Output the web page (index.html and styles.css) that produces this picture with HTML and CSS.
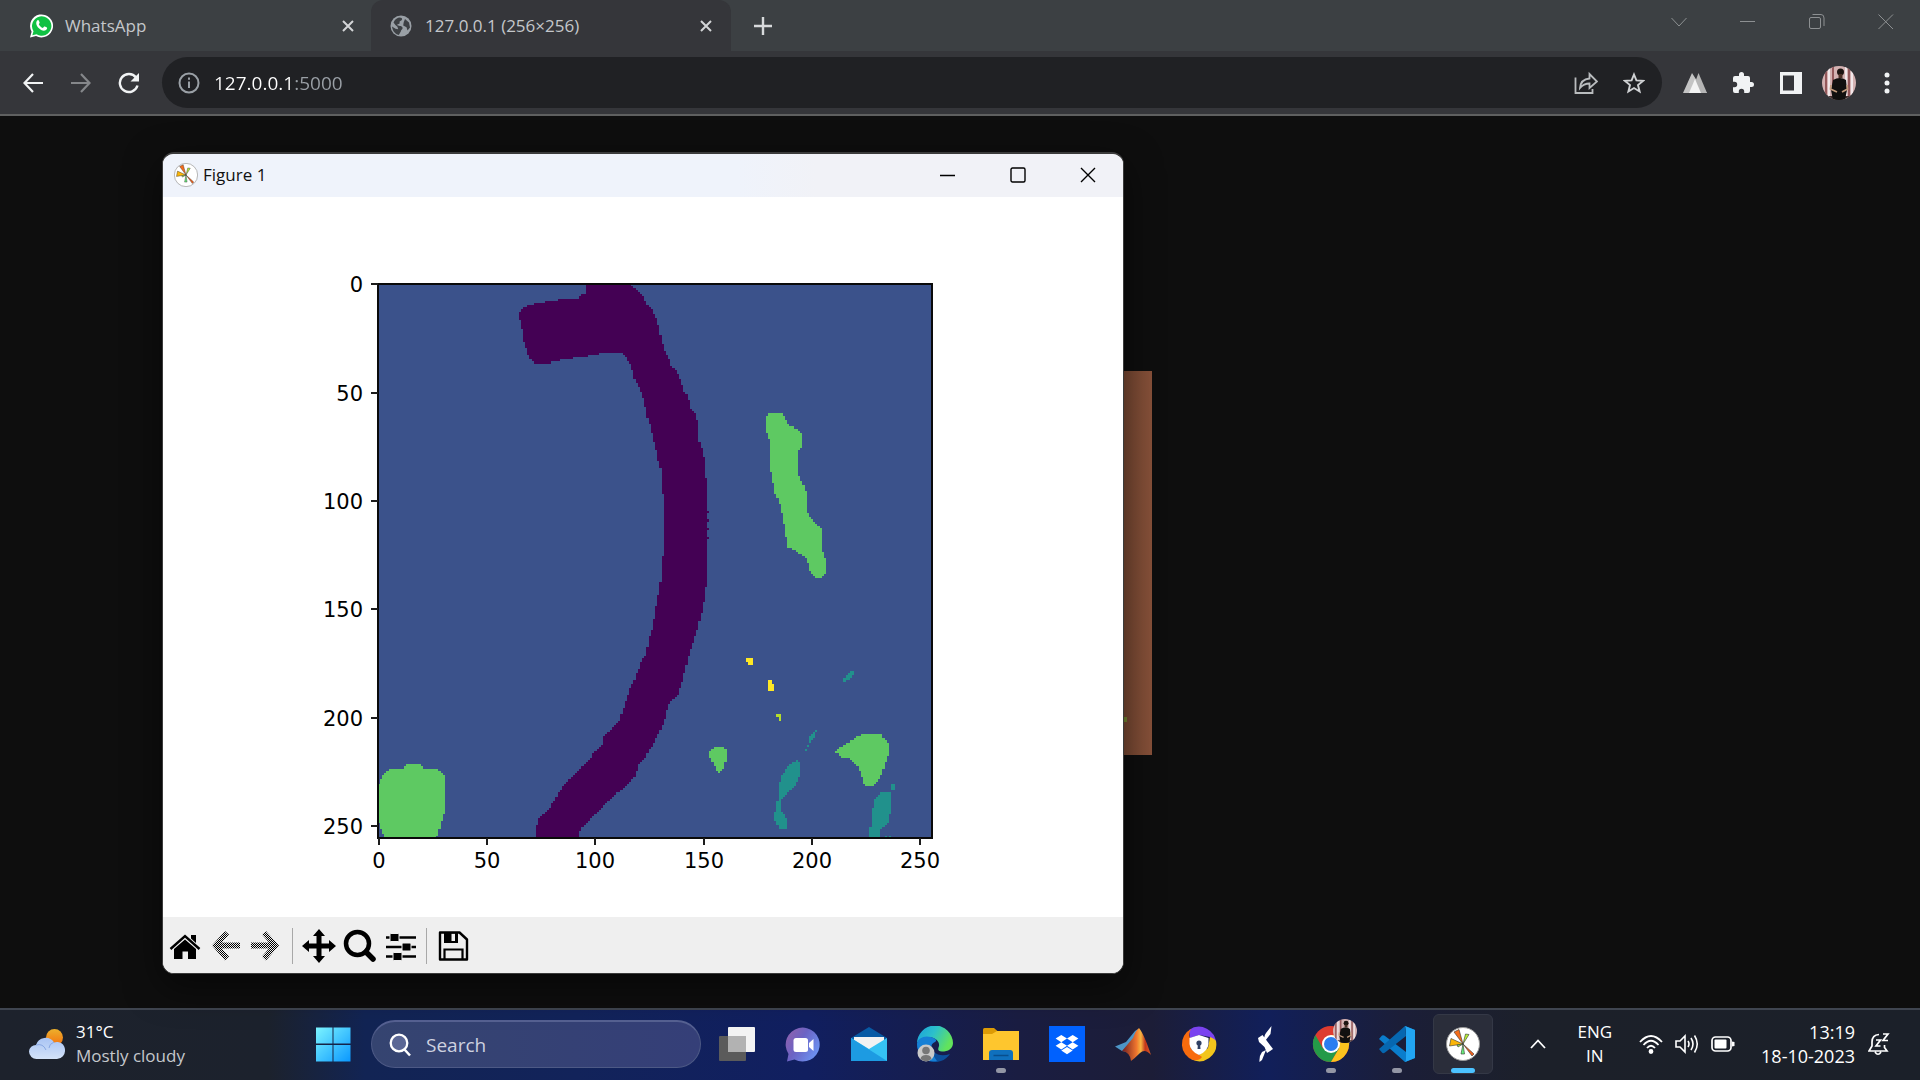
FILE: index.html
```html
<!DOCTYPE html>
<html lang="en">
<head>
<meta charset="utf-8">
<title>127.0.0.1 (256×256)</title>
<link rel="stylesheet" href="styles.css">
</head>
<body>
<div class="desktop">
  <header class="browser">
    <div class="tabstrip">
      <div class="tab">
        <svg class="favicon" viewBox="0 0 24 24"><path d="M1 23.500 2.600 17.700A11.500 11.500 0 1 1 7 22Z" fill="#fff"/><path d="M3.300 21.300 4.500 17.200A9.700 9.700 0 1 1 7.500 20.200Z" fill="#10c143"/><path d="M8.300 6.400c.5-.5 1.200-.4 1.500.2l.8 2c.1.400 0 .7-.8 1.600.9 1.900 2.200 3 4.100 3.800l1-1.200c.3-.3.600-.4 1-.2l2 1c.5.3.3 2-1.300 2.700-2.300 1-5-.4-7-2.400-2-2.200-3.400-5.300-1.300-7.500z" fill="#fff"/></svg>
        <span class="tab-title">WhatsApp</span>
        <button class="tab-close" aria-label="Close WhatsApp"><svg width="12" height="12" viewBox="0 0 12 12"><path d="M1 1 11 11M11 1 1 11" stroke="#d3d5d7" stroke-width="2"/></svg></button>
      </div>
      <div class="tab tab-active">
        <svg class="favicon" viewBox="0 0 24 24"><circle cx="12" cy="12" r="10.500" fill="#9aa0a6"/><path d="M10 3.500c3 .2 3.800 1.200 2.600 2.700l-2 1.300v2L8 10.800c1 1.500 5 .5 5.600 3 .3 1.500-1.500 2-1.800 3.600L9.800 21C6 20 3.500 17 3 12.500l3.500 2.200 2.700.5-.8-2.500-2-1.700L4.500 8.500C5.500 6 7.500 4.300 10 3.500zM16 5l4 3.500 1 5-2.500 3-1-3.200-3.300-1.700.5-3.300z" fill="#3d4044"/></svg>
        <span class="tab-title">127.0.0.1 (256×256)</span>
        <button class="tab-close" aria-label="Close 127.0.0.1"><svg width="12" height="12" viewBox="0 0 12 12"><path d="M1 1 11 11M11 1 1 11" stroke="#d3d5d7" stroke-width="2"/></svg></button>
      </div>
      <button class="new-tab" aria-label="New tab"><svg width="18" height="18" viewBox="0 0 18 18"><path d="M9 0V18M0 9H18" stroke="#d8dadc" stroke-width="2.400"/></svg></button>
      <div class="window-controls">
        <button aria-label="Search tabs"><svg width="16" height="16" viewBox="0 0 16 16"><path d="M.500 4 8 12 15.500 4"/></svg></button>
        <button aria-label="Minimize"><svg width="16" height="16" viewBox="0 0 16 16"><path d="M0 7.500H15"/></svg></button>
        <button aria-label="Restore"><svg width="16" height="16" viewBox="0 0 16 16"><rect x=".5" y="3.500" width="11" height="11" rx="1.500"/><path d="M3.500 .500H12Q15 .500 15 4V12"/></svg></button>
        <button aria-label="Close"><svg width="16" height="16" viewBox="0 0 16 16"><path d="M.500 .500 15 15M15 .500 .500 15"/></svg></button>
      </div>
    </div>
    <div class="toolbar">
      <button class="tool" aria-label="Back"><svg width="20" height="20" viewBox="0 0 20 20"><path d="M10 1 1.500 10 10 19M1.500 10H20" fill="none" stroke="#f1f3f4" stroke-width="2.200"/></svg></button>
      <button class="tool" aria-label="Forward"><svg width="20" height="20" viewBox="0 0 20 20"><path d="M10 1 18.500 10 10 19M18.500 10H0" fill="none" stroke="#85878a" stroke-width="2.200"/></svg></button>
      <button class="tool" aria-label="Reload"><svg width="22" height="22" viewBox="0 0 22 22"><path d="M18 5.500A9 9 0 1 0 19.500 13.500" fill="none" stroke="#f1f3f4" stroke-width="2.400"/><path d="M21 1V9.500H12.500Z" fill="#f1f3f4"/></svg></button>
      <div class="omnibox">
        <svg width="22" height="22" viewBox="0 0 22 22"><circle cx="11" cy="11" r="9.500" fill="none" stroke="#9aa0a6" stroke-width="2"/><path d="M11 9.500V16M11 5.500V7.700" stroke="#9aa0a6" stroke-width="2"/></svg>
        <input class="address" type="text" value="127.0.0.1:5000" aria-label="Address">
        <button aria-label="Share"><svg width="24" height="24" viewBox="0 0 24 24" fill="none" stroke="#b9bcbe" stroke-width="1.800"><path d="M1.500 6.500V22H18.500V18"/><path d="M6 17C6.500 11 10 8 15.500 7.500V3L23 10.500 15.500 17V12.500C11.500 12.500 8.500 14 6 17Z"/></svg></button>
        <button aria-label="Bookmark"><svg width="22" height="22" viewBox="0 0 22 22"><path d="M11 2.500 13.400 8.400 20 8.900 15 13.100 16.600 19.500 11 16 5.400 19.500 7 13.100 2 8.900 8.600 8.400Z" fill="none" stroke="#d0d2d4" stroke-width="1.900"/></svg></button>
      </div>
      <button class="tool" aria-label="Extension"><svg width="24" height="22" viewBox="0 0 24 22"><path d="M0 21 9 1 16 12 24 21Z" fill="#c4c4c4"/><path d="M8 21 15.500 1 24 21Z" fill="#b5b5b5"/><path d="M6 21 12 7 18 21Z" fill="#f3f3f3"/></svg></button>
      <button class="tool" aria-label="Extensions"><svg width="24" height="24" viewBox="0 0 24 24"><path d="M20.500 11H19V7a2 2 0 0 0-2-2h-4V3.500a2.500 2.500 0 0 0-5 0V5H4a2 2 0 0 0-2 2v3.800h1.500a2.700 2.700 0 0 1 0 5.400H2V20a2 2 0 0 0 2 2h3.800v-1.500a2.700 2.700 0 0 1 5.400 0V22H17a2 2 0 0 0 2-2v-4h1.500a2.500 2.500 0 0 0 0-5z" fill="#f1f3f4"/></svg></button>
      <button class="tool" aria-label="Side panel"><svg width="22" height="22" viewBox="0 0 22 22"><path d="M0 0H22V22H0ZM3 3.500V18.500H14V3.500Z" fill="#f1f3f4" fill-rule="evenodd"/></svg></button>
      <button class="tool" aria-label="Profile"><svg width="34" height="34" viewBox="0 0 34 34"><use href="#portrait"/></svg></button>
      <button class="tool" aria-label="Menu"><svg width="6" height="22" viewBox="0 0 6 22" fill="#f1f3f4"><circle cx="3" cy="3" r="2.500"/><circle cx="3" cy="11" r="2.500"/><circle cx="3" cy="19" r="2.500"/></svg></button>
    </div>
  </header>

  <main class="page">
    <div class="served-image" role="img" aria-label="Image served by 127.0.0.1"><span class="speck"></span></div>
  </main>

  <section class="figure-window" aria-label="Figure 1">
    <div class="figure-title">
      <svg width="24" height="24" viewBox="0 0 34 34"><use href="#mpl"/></svg>
      <span>Figure 1</span>
      <div class="figure-controls">
        <button aria-label="Minimize figure"><svg width="16" height="16" viewBox="0 0 16 16"><path d="M0 8.500H15"/></svg></button>
        <button aria-label="Maximize figure"><svg width="16" height="16" viewBox="0 0 16 16"><rect x="1" y="1" width="14" height="14" rx="1.500"/></svg></button>
        <button aria-label="Close figure"><svg width="16" height="16" viewBox="0 0 16 16"><path d="M1 1 15 15M15 1 1 15"/></svg></button>
      </div>
    </div>
    <svg class="plot" viewBox="0 0 960 720" role="img" aria-label="Segmentation mask">
      <rect x="215" y="87" width="554" height="554" fill="#3b528b"/>
      <g id="mask" transform="translate(214.800 86.400) scale(2.166)" shape-rendering="crispEdges"></g>
      <rect x="215" y="87" width="554" height="554" fill="none" stroke="#0a0a0a" stroke-width="2"/>
      <path class="ticks" d="M208 87H215M208 196H215M208 304H215M208 412H215M208 521H215M208 629H215M216 641V648M324 641V648M432 641V648M541 641V648M649 641V648M757 641V648"/>
      <g class="labels y-labels"><text x="200" y="95">0</text><text x="200" y="204">50</text><text x="200" y="312">100</text><text x="200" y="420">150</text><text x="200" y="529">200</text><text x="200" y="637">250</text></g>
      <g class="labels x-labels"><text x="216" y="671">0</text><text x="324" y="671">50</text><text x="432" y="671">100</text><text x="541" y="671">150</text><text x="649" y="671">200</text><text x="757" y="671">250</text></g>
    </svg>
    <div class="figure-toolbar">
      <button aria-label="Home"><svg width="34" height="34" viewBox="0 0 34 34"><path d="M6 20 17 10.500 28 20V30H20V22.500H14.500V30H6Z"/><path d="M2.500 20 17 7 31.500 20" fill="none" stroke="#000" stroke-width="2.400"/><path d="M23 6H28V14L23 9.500Z"/></svg></button>
      <button aria-label="Previous view" disabled><svg width="34" height="34" viewBox="0 0 34 34"><path d="M3 16.500 16 2 20 5.500 13 13.500H31V19.500H13L20 27.500 16 31.500Z" fill="url(#dither)"/></svg></button>
      <button aria-label="Next view" disabled><svg width="34" height="34" viewBox="0 0 34 34"><path d="M29 16.500 16 2 12 5.500 19 13.500H1V19.500H19L12 27.500 16 31.500Z" fill="url(#dither)"/></svg></button>
      <span class="divider"></span>
      <button aria-label="Pan"><svg width="34" height="34" viewBox="0 0 34 34"><path d="M17 0 23 7H19.500V14.500H27V11L34 17 27 23V19.500H19.500V27H23L17 34 11 27H14.500V19.500H7V23L0 17 7 11V14.500H14.500V7H11Z"/></svg></button>
      <button aria-label="Zoom"><svg width="34" height="34" viewBox="0 0 34 34"><circle cx="14.500" cy="14.500" r="11.500" fill="none" stroke="#000" stroke-width="4.500"/><path d="M23 23 30 30" stroke="#000" stroke-width="5.500" stroke-linecap="round"/></svg></button>
      <button aria-label="Configure subplots"><svg width="34" height="34" viewBox="0 0 34 34"><path d="M2 8.500H32M2 18H32M2 27.500H32" stroke="#000" stroke-width="2.500"/><rect x="6" y="4.500" width="9" height="8" rx="1" stroke="#efefef"/><rect x="18" y="14" width="9" height="8" rx="1" stroke="#efefef"/><rect x="9" y="23.500" width="9" height="8" rx="1" stroke="#efefef"/></svg></button>
      <span class="divider"></span>
      <button aria-label="Save"><svg width="34" height="34" viewBox="0 0 34 34"><path d="M4 3.500H23.500L31 10.500V30.500H4Z" fill="none" stroke="#000" stroke-width="2.400" stroke-linejoin="round"/><path d="M8 3H22V14H8ZM15.500 4.500V12H19V4.500Z" fill-rule="evenodd"/><path d="M8.500 30V20.500H26.500V30" fill="none" stroke="#000" stroke-width="2.200"/></svg></button>
    </div>
  </section>

  <footer class="taskbar">
    <button class="weather">
      <svg width="36" height="32" viewBox="0 0 36 32"><defs><linearGradient id="sun" x1="0" y1="0" x2="0" y2="1"><stop offset="0" stop-color="#ecb02c"/><stop offset="1" stop-color="#f4700f"/></linearGradient><linearGradient id="cloud" x1="0" y1="0" x2="0" y2="1"><stop offset="0" stop-color="#a9c4f4"/><stop offset="1" stop-color="#d3e2f8"/></linearGradient></defs><circle cx="25.500" cy="9.500" r="8.500" fill="url(#sun)"/><path d="M7 17A10 10 0 0 1 25 14.500 8 8 0 0 1 36 22 8.500 8.500 0 0 1 28 31H8A7.500 7.500 0 0 1 0 23.500 7 7 0 0 1 7 17Z" fill="url(#cloud)"/><path d="M7 17Q14 15 17 22M25 14Q20 16 20 20" fill="none" stroke="#88a8e4" stroke-width="1"/></svg>
      <span class="weather-text"><span>31°C</span><span class="muted">Mostly cloudy</span></span>
    </button>
    <nav class="apps" aria-label="Taskbar">
      <button class="app" aria-label="Start"><svg width="36" height="36" viewBox="0 0 36 36"><defs><linearGradient id="win" x1="0" y1="0" x2="1" y2="1"><stop offset="0" stop-color="#7cf4ff"/><stop offset="1" stop-color="#0a98ff"/></linearGradient></defs><path d="M1 1.500H17.500V17.500H1ZM18.500 1.500H35.500V17.500H18.500ZM1 19H17.500V35.500H1ZM18.500 19H35.500V35.500H18.500Z" fill="url(#win)"/></svg></button>
      <label class="search"><svg width="24" height="24" viewBox="0 0 24 24"><circle cx="11" cy="10" r="8.300" fill="#5b6795" stroke="#fff" stroke-width="2.300"/><path d="M16.500 16.500 22 22.500" stroke="#fff" stroke-width="2.500"/></svg><input type="text" placeholder="Search" aria-label="Search"></label>
      <button class="app" aria-label="Task view"><svg width="36" height="36" viewBox="0 0 36 36"><rect x="0" y="10" width="27" height="25" rx="1" fill="#5b5b5b"/><rect x="9" y="1" width="27" height="25" rx="1" fill="#f3f3f3"/><path d="M9 10H27V26H9Z" fill="#b2b2b2"/></svg></button>
      <button class="app" aria-label="Chat"><svg width="36" height="36" viewBox="0 0 36 36"><defs><linearGradient id="chat" x1="0" y1="0" x2="1" y2=".6"><stop offset="0" stop-color="#9560a8"/><stop offset=".5" stop-color="#6b63c4"/><stop offset="1" stop-color="#6c90ef"/></linearGradient></defs><path d="M2 35.500 3.500 28A17 17 0 1 1 9.500 33.500Z" fill="url(#chat)"/><rect x="8.500" y="12" width="14.500" height="14" rx="2.500" fill="#fff"/><path d="M24 17 28.500 13V25L24 21Z" fill="#fff"/></svg></button>
      <button class="app" aria-label="Mail"><svg width="36" height="36" viewBox="0 0 36 36"><path d="M0 12 18 1 36 12V20H0Z" fill="#075aa5"/><path d="M3 11H33V25H3Z" fill="#f2f2f2"/><path d="M0 12 18 23 36 12V35H0Z" fill="#35c2f3"/><path d="M0 12 36 35H0Z" fill="#1d9be2"/></svg></button>
      <button class="app" aria-label="Edge"><svg width="36" height="36" viewBox="0 0 36 36"><defs><linearGradient id="edge" x1="0" y1="0" x2="1" y2=".4"><stop offset="0" stop-color="#1aa0dc"/><stop offset=".5" stop-color="#2cc0cb"/><stop offset="1" stop-color="#62e35c"/></linearGradient></defs><path d="M0 17A18 18 0 0 0 33 28Q24 31 18 27 13 22 15 14Z" fill="#0c4f9c"/><path d="M0 18A18 18 0 0 1 36 17C36 23 31 25.500 25 25.500 20 25 21 23 22 20 23 14 16 11 11 11 5 11 1 14 0 18Z" fill="url(#edge)"/><path d="M0 18C1 12 7 9 14 11 20 13 20 15 18 16 12 18 13 26 20 35 9 37 0 29 0 18Z" fill="#1680d6"/><circle cx="9" cy="27" r="8.500" fill="#c9c9c9"/><circle cx="9" cy="24.500" r="3.800" fill="#777"/><path d="M3.500 33Q4 29 9 29T14.500 33Q9 37.500 3.500 33Z" fill="#777"/></svg></button>
      <button class="app running" aria-label="File Explorer"><svg width="36" height="36" viewBox="0 0 36 36"><path d="M0 3.500Q0 2 1.500 2H11L15 5.500V9L9 12H0Z" fill="#dd9b05"/><path d="M0 8H9L14 5H36V34H0Z" fill="#fec62e"/><path d="M6 34V27Q6 24 9 24H27Q30 24 30 27V34Z" fill="#0f70bd"/><path d="M10.500 29.500H25.500" stroke="#084e8c" stroke-width="1.500"/></svg></button>
      <button class="app" aria-label="Dropbox"><svg width="36" height="36" viewBox="0 0 36 36"><path fill="#0061fe" d="M0 0H36V36H0Z"/><path fill="#fff" d="M12.300 9 18 12.600 12.300 16.200 6.600 12.600ZM23.700 9 29.400 12.600 23.700 16.200 18 12.600ZM12.300 16.200 18 19.800 12.300 23.400 6.600 19.800ZM23.700 16.200 29.400 19.800 23.700 23.400 18 19.800ZM18 21 23.700 24.600 18 28.200 12.300 24.600Z"/></svg></button>
      <button class="app" aria-label="MATLAB"><svg width="36" height="36" viewBox="0 0 36 36"><defs><linearGradient id="mat"><stop offset="0" stop-color="#6e1c20"/><stop offset=".5" stop-color="#f0762e"/><stop offset=".65" stop-color="#f6b642"/><stop offset=".8" stop-color="#c2351b"/><stop offset="1" stop-color="#d65a26"/></linearGradient></defs><path d="M0 20.500 11 16 20 5 23 3 13 26 7 25Z" fill="#4d95c6"/><path d="M7 25Q13 18 18 12 21 4 24 2 29 8 36 29 30 22 25 27 20 32 16 35 15 26 7 25Z" fill="url(#mat)"/></svg></button>
      <button class="app" aria-label="Secure browser"><svg width="36" height="36" viewBox="0 0 36 36"><path d="M8 4A17 17 0 0 1 35 18L29 11 18 9 9 12Z" fill="#7a43f0"/><path d="M35 15A17 17 0 0 1 10 33L18 29 27 22 29 11Q34 13 35 15Z" fill="#f3c51c"/><path d="M10 3A17 17 0 0 0 12 34Q18 35 21 31L10 23 9 12Q7 8 10 3Z" fill="#f86b0d"/><path d="M18 9 27.500 12V18Q27 25 18 29 9 25 8.500 18V12Z" fill="#fff"/><circle cx="18" cy="17" r="2.600" fill="#314063"/><path d="M17 17H19L19.500 23H16.500Z" fill="#314063"/></svg></button>
      <button class="app" aria-label="Stylus"><svg width="36" height="36" viewBox="0 0 36 36" fill="#fff"><path d="M24.500 0 23.500 8 18 15Q16 11 19 7ZM11 12 15.500 9 26 23 20 27 17.500 21 12 16ZM19 24 15 34 12.500 36Q12 30 15 26Z"/></svg></button>
      <button class="app running" aria-label="Chrome"><svg width="52" height="52" viewBox="-8 0 52 52"><circle cx="18" cy="26" r="18" fill="#de3b2f"/><path d="M2.400 17A18 18 0 0 0 18 44L26 30.500 18 26 10 30.500Z" fill="#249a48"/><path d="M33.600 17A18 18 0 0 1 18 44L26 30.500 18 17Z" fill="#fcc31e"/><circle cx="18" cy="26" r="9" fill="#fff"/><circle cx="18" cy="26" r="7" fill="#2a7df0"/><svg x="20" y="1" width="24" height="24" viewBox="0 0 34 34"><use href="#portrait"/></svg></svg></button>
      <button class="app running" aria-label="Visual Studio Code"><svg width="36" height="36" viewBox="0 0 36 36"><path d="M26 0 36 4V32L26 36 0 13 3 9.500Q5 9 6 10L27 26V10Z" fill="#0a7dcc"/><path d="M26 0 27 10 6 26.500Q4 28 3 26.500L0 23Z" fill="#0667b0"/><path d="M26 0 36 4V32L26 36Q27 35 27 33V3Q27 1 26 0Z" fill="#22a5f2"/></svg></button>
      <button class="app active" aria-label="Figure 1"><svg width="34" height="34" viewBox="0 0 34 34"><use href="#mpl"/></svg></button>
    </nav>
    <div class="tray">
      <button aria-label="Hidden icons"><svg width="16" height="10" viewBox="0 0 16 10"><path d="M1 9 8 1.500 15 9" fill="none" stroke="#fff" stroke-width="1.800"/></svg></button>
      <button class="language"><span>ENG</span><span>IN</span></button>
      <button class="status" aria-label="Network, volume and battery">
        <svg width="24" height="20" viewBox="0 0 24 20" fill="none" stroke="#fff" stroke-width="1.800"><path d="M1 8Q12-4 23 8M4.500 11Q12 2.500 19.500 11M8 14Q12 9.500 16 14"/><circle cx="12" cy="17.500" r="1.500" fill="#fff"/></svg>
        <svg width="24" height="20" viewBox="0 0 24 20" fill="none" stroke="#fff" stroke-width="1.600"><path d="M1 7H5L10 2V18L5 13H1ZM13 7Q15 10 13 13M16 4Q20 10 16 16M19.500 1.500Q25 10 19.500 18.500"/></svg>
        <svg width="24" height="18" viewBox="0 0 24 18"><rect x="1" y="2" width="19" height="14" rx="3.500" fill="none" stroke="#fff" stroke-width="1.700"/><rect x="3.500" y="4.500" width="12" height="9" rx="1" fill="#fff"/><path d="M21 6.500 23.500 7V11L21 11.500Z" fill="#fff"/></svg>
      </button>
      <button class="clock"><span>13:19</span><span>18-10-2023</span></button>
      <button aria-label="Notifications"><svg width="22" height="24" viewBox="0 0 22 24" fill="none" stroke="#fff" stroke-width="1.700"><path d="M11 2.500Q4 3 4 10V14L1 19H19L16.500 15.500V13M7 20Q10 24.500 13 20"/><path d="M8 8H12.500L8 14H12.500M15 2H20L15 8.500H20"/></svg></button>
    </div>
  </footer>
</div>

<svg class="symbols" aria-hidden="true">
  <defs>
    <pattern id="dither" width="2" height="2" patternUnits="userSpaceOnUse"><path d="M0 0H1V1H0ZM1 1H2V2H1Z"/></pattern>
    <clipPath id="round"><circle cx="17" cy="17" r="17"/></clipPath>
    <symbol id="mpl" viewBox="0 0 34 34"><circle cx="17" cy="17" r="16.500" fill="#fff" stroke="#999"/><g stroke="#333" stroke-width=".6"><path d="M17 17 8 5 13 2.500Z" fill="#f46d1b"/><path d="M17 17 3.500 19 5 11.500Z" fill="#fbb508"/><path d="M17 17 19.500 7 23 7.500Z" fill="#b7f035"/><path d="M17 17 28 27 26 29Z" fill="#f0601c"/><path d="M17 17 18.500 27H15Z" fill="#68f07a"/><path d="M17 17 12 20 11 18Z" fill="#a2ee4c"/></g></symbol>
    <symbol id="portrait" viewBox="0 0 34 34"><g clip-path="url(#round)"><path fill="#d4b2b2" d="M0 0H34V34H0Z"/><path d="M4 0V34M11 0V34M27 0V34" stroke="#94585a" stroke-width="2"/><path d="M7 0V34M24 0V34M30 0V34" stroke="#f2e8ea" stroke-width="2"/><path d="M0 30H34V34H0Z" fill="#43302f"/><circle cx="18.500" cy="6" r="3.500" fill="#1c1411"/><path d="M16.500 8H20.500V12H16.500Z" fill="#4c3027"/><path d="M11 14Q18 10 24 14L25 24 23 34H11L9 24Z" fill="#12100f"/><path d="M9 19 8.500 23 15 26M25 19 25.500 23 20 26" stroke="#c39a7c" stroke-width="1.800" fill="none"/></g></symbol>
  </defs>
</svg>
<script src="mask.js"></script>
</body>
</html>
```
FILE: styles.css
```css
* { box-sizing: border-box; }
body { margin: 0; background: #0e0e0e; font-family: "Open Sans", "Noto Sans", sans-serif; font-size: 17px; }
button { border: 0; padding: 0; background: none; color: inherit; font: inherit; display: flex; align-items: center; justify-content: center; }
input { border: 0; padding: 0; outline: 0; background: none; color: inherit; font: inherit; min-width: 0; }
svg { display: block; flex: none; }
.symbols { position: absolute; width: 0; height: 0; }
.desktop { position: relative; display: flex; flex-direction: column; min-height: 100vh; overflow: hidden; }

.browser { border-bottom: 2px solid #5f6060; background: #35363a; }
.tabstrip { display: flex; height: 51px; background: #3c4043; }
.tab { display: flex; align-items: center; gap: 12px; width: 371px; padding: 0 16px 0 29px; color: #c4c7cb; }
.tab-active { width: 360px; padding: 0 18px; border-radius: 12px 12px 0 0; background: #35363a; }
.favicon { width: 24px; height: 24px; }
.tab-title { flex: 1; white-space: nowrap; }
.tab-close { width: 14px; height: 24px; }
.new-tab { width: 64px; }
.window-controls { display: flex; margin-left: auto; }
.window-controls button { width: 69px; padding-bottom: 8px; }
.window-controls svg { fill: none; stroke: #8d9092; stroke-width: 1; }

.toolbar { display: flex; align-items: center; height: 63px; padding: 0 9px; }
.tool { width: 48px; height: 48px; }
.omnibox { flex: 1; display: flex; align-items: center; gap: 24px; height: 51px; margin: 0 9px; padding: 0 16px; border-radius: 26px; background: #202124; }
.omnibox button { width: 24px; height: 48px; }
.address { flex: 1; margin-left: -10px; height: 30px; font-size: 19px; color: transparent; background: linear-gradient(90deg, #fff 80px, #9aa0a6 80px); -webkit-background-clip: text; background-clip: text; }

.page { flex: 1; display: flex; align-items: center; justify-content: center; padding-top: 2px; }
.served-image { position: relative; width: 384px; height: 384px; background: linear-gradient(90deg, #734630 90%, #865039); }
.speck { position: absolute; left: 356px; top: 346px; width: 3px; height: 5px; background: #74872f; }

.figure-window { position: absolute; left: 162px; top: 152px; width: 962px; border: 1px solid #3b3b3b; border-top-width: 2px; border-radius: 12px; overflow: hidden; background: #fff; box-shadow: 0 12px 36px rgba(0, 0, 0, 0.5); }
.figure-title { display: flex; align-items: center; gap: 5px; height: 43px; padding: 0 0 2px 11px; background: linear-gradient(90deg, #eff3fb 60%, #f1f2f7 68%); color: #111; }
.figure-controls { display: flex; align-self: stretch; margin-left: auto; }
.figure-controls button { width: 70px; }
.figure-controls svg { fill: none; stroke: #000; stroke-width: 1.400; }
.plot { width: 100%; height: auto; }
.ticks { fill: none; stroke: #1c1c1c; stroke-width: 2; }
.labels { font-family: "DejaVu Sans", sans-serif; font-size: 21px; fill: #000; }
.y-labels { text-anchor: end; }
.x-labels { text-anchor: middle; }
.figure-toolbar { display: flex; align-items: center; height: 56px; padding: 2px 0 0 1px; background: #efefef; }
.figure-toolbar button { width: 41px; }
.divider { width: 1px; height: 36px; margin: 0 5px; background: #a8a8a8; }

.taskbar { display: flex; height: 72px; padding-bottom: 2px; border-top: 2px solid #3f4550; background: linear-gradient(90deg, #1d222c 0, #1c222d 14%, #122454 19%, #12235a 30%, #111f60 42%, #1a1d42 53%, #1c1d37 60%, #111f5a 66%, #1b1e38 73%, #1c2029 80%, #1b2029 100%); color: #fff; }
.weather { width: 300px; padding-left: 29px; gap: 11px; justify-content: flex-start; }
.weather-text, .language, .clock { display: flex; flex-direction: column; line-height: 24px; }
.weather-text { text-align: left; }
.muted { color: #c5c8cc; }
.apps { display: flex; align-items: center; }
.app { position: relative; width: 66px; height: 60px; }
.app.running::after, .app.active::after { content: ""; position: absolute; left: 28px; bottom: 1px; width: 10px; height: 5px; border-radius: 3px; background: #9396a5; }
.app.active { width: 60px; margin-left: 3px; border: 1px solid #343846; border-radius: 6px; background: #2a2d3a; }
.app.active::after { left: 17px; bottom: 0; width: 24px; background: #4cc2ff; }
.search { display: flex; align-items: center; gap: 14px; width: 330px; height: 48px; margin: 0 3px 0 5px; padding: 0 16px; border: 1px solid #4d5985; border-top: 2px solid #566192; border-radius: 24px; background: linear-gradient(90deg, #354470, #353f78); }
.search input { flex: 1; font-size: 19px; }
.search input::placeholder { color: #ced2e0; opacity: 1; }
.tray { display: flex; align-items: center; margin-left: auto; padding-right: 30px; }
.language { margin-left: 31px; }
.status { gap: 12px; margin-left: 27px; }
.clock { align-items: flex-end; margin: 0 13px 0 26px; font-size: 18px; }
```
FILE: mask.js
```js
// Class regions of the 256x256 mask, in cell coordinates, as x,y pairs.
const regions = [
  ['#440154', '95.700,0 116.500,0 123,7 125,11 127,13 129,17 130,22 132,30 134,34 136,39 138,41 140,45 141,49 143,52 144,57 147,61 148,65 148.500,73 150,78 151,83 152,97 152,136 151,144 150,150 149,154 148,158 147,162 145,167 143,174 141,182 139,189 134,195 132,203 130,207 128,211 124,218 120,223 119,227 115,232 108,237 100,246 96,249 93,253.600 93,256 73,256 73,251 75,246 80,241 85,233 96,221.600 104,212 104,209 112,201 114,194 117,186 120,179 122,173 124,171 125,164 127,158 128,151 129,146 130,141 131,135 131,126 132,126 132,99 131,96 131,87 129.400,81.500 128,75 127,71.500 126,67 125,64 124,60 123,55 122,51 120,47 118,43 117,38 115,35 112,32 104,32 94,34 86,35 80,36.500 72,36.600 69.500,33.500 67.500,27 66,18 65,17 65,14 66.500,12 69.500,10 74,9 79,8 86.500,7 92.500,6.500 96.500,4'],
  ['#440154', '152,105 153,105 153,106 152,106'],
  ['#440154', '152,109 153,109 153,110 152,110'],
  ['#440154', '152,113 153,113 153,114 152,114'],
  ['#440154', '152,117 153,117 153,118 152,118'],
  ['#5ec962', '179.300,61 181,60 187,60 190.300,66 193.400,67.200 196,70 196,75.400 194,78 194,88.500 196,92.300 198,97 198,104.600 200,109 205,114 205,123 207,127.700 207,132 206,135 204,136.700 201.600,135.400 199,133 198.300,127.700 196,125.700 189.500,121.600 188,114 186.500,106 185,100 183,95.400 181.400,86 181,74 179.500,69'],
  ['#5ec962', '153.400,215.800 155,214 160,214 161,215.400 161,219 160,223 157,226 156,223.500 153,218.500'],
  ['#5ec962', '211.400,215.800 215.700,213 219.600,210.500 223.900,208 232.200,208 236.200,212.700 236.200,215.800 234.200,222.400 232.200,227.800 228.500,231.800 224.700,231.800 221.900,223.500 217.300,219 214.500,218.800 211.400,216.700'],
  ['#5ec962', '0,232.400 3,226 5.600,224 11,224 13.300,222.200 19.500,222.200 22,224 28,224 31,227.500 31,243 29,250 27,256 3.300,256 0,247.800'],
  ['#21918c', '214.500,182.700 218,179 220.200,179 220.200,180.400 216.200,183.700 214.500,183.700'],
  ['#21918c', '199.300,209.600 202,207 202,209 200,212 199.300,212'],
  ['#21918c', '202,206 203,206 203,207 202,207'],
  ['#21918c', '198,213 199,213 199,214 198,214'],
  ['#21918c', '197,215 198,215 198,216 197,216'],
  ['#21918c', '193.700,220 195.300,221.300 195.300,226.200 192.600,231.600 186.500,237.800 186,243 189,248 189,252 185.400,252 183.400,247.500 183.400,244 184.500,238.500 184.500,232.400 186.500,227 189.600,222.400'],
  ['#21918c', '237.300,234.700 237.300,242.400 235.300,249.300 231.400,253 232.400,256 226.500,256 227.600,251 228.500,242.400 229.600,237.800 231.900,235.500'],
  ['#21918c', '237,231 239,231 239,234 237,234'],
  ['#21918c', '234,255 235,255 235,256 234,256'],
  ['#21918c', '236,255 237,255 237,256 236,256'],
  ['#fde725', '170,173 173,173 173,176 171,176 171,175 170,175'],
  ['#fde725', '180,183 182,183 182,185 183,185 183,188 180,188'],
  ['#b5de2b', '184,199 186,199 186,202 185,202 185,200 184,200']
];

// Fill a polygon with whole cells, one run per row crossing.
function cells(points) {
  const pts = points.split(' ').map(p => p.split(',').map(Number));
  let d = '';
  for (let row = 0; row < 256; row++) {
    const y = row + 0.5;
    const xs = [];
    pts.forEach(([x1, y1], i) => {
      const [x2, y2] = pts[(i + 1) % pts.length];
      if ((y1 <= y) !== (y2 <= y)) xs.push(x1 + (y - y1) * (x2 - x1) / (y2 - y1));
    });
    xs.sort((a, b) => a - b);
    for (let i = 0; i + 1 < xs.length; i += 2) {
      const a = Math.round(xs[i]);
      const b = Math.round(xs[i + 1]);
      if (b > a) d += `M${a} ${row}H${b}V${row + 1}H${a}Z`;
    }
  }
  return d;
}

const mask = document.getElementById('mask');
for (const [fill, points] of regions) {
  const path = document.createElementNS('http://www.w3.org/2000/svg', 'path');
  path.setAttribute('fill', fill);
  path.setAttribute('d', cells(points));
  mask.append(path);
}
```
